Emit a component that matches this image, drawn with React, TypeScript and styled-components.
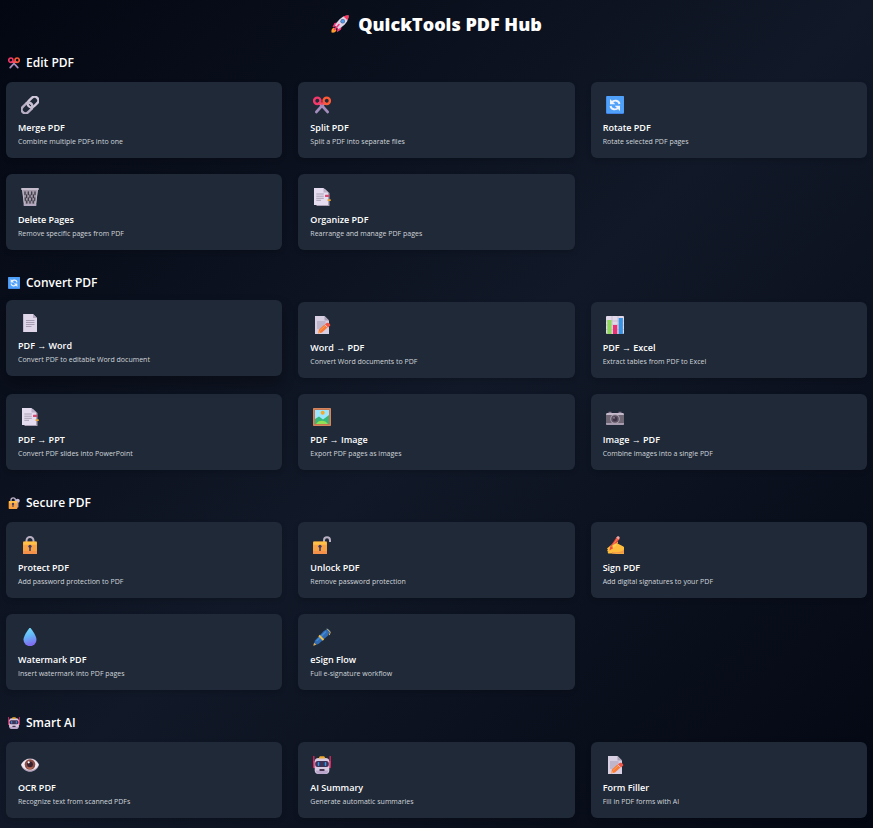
import React from 'react';
import styled, { createGlobalStyle } from 'styled-components';

const GlobalStyle = createGlobalStyle`
  *, *::before, *::after { box-sizing: border-box; }
  body {
    margin: 0;
    background: #030712;
    color: #fff;
    font-family: 'Open Sans', 'Noto Sans', sans-serif;
  }
  h1, h2, h3, p { margin: 0; }
`;

const Page = styled.main`
  min-height: 100vh;
  padding: 11px 6px 10px;
  background: linear-gradient(to bottom right, #030712, #111827, #030712);
`;

const PageTitle = styled.h1`
  display: flex;
  align-items: center;
  justify-content: center;
  gap: 9px;
  margin-bottom: 18px;
  font-size: 18px;
  line-height: 26px;
  font-weight: 800;
`;

const Section = styled.section`
  & + & { margin-top: 25px; }
`;

const SectionTitle = styled.h2`
  display: flex;
  align-items: center;
  gap: 6px;
  margin-bottom: 11px;
  padding-left: 2px;
  font-size: 12px;
  line-height: 16px;
  font-weight: 600;
`;

const CardGrid = styled.div`
  display: grid;
  grid-template-columns: repeat(3, minmax(0, 1fr));
  gap: 16px;
`;

const Card = styled.a<{ $raised?: boolean }>`
  display: block;
  padding: 12px 12px 11px;
  border-radius: 6px;
  background: #1f2937;
  color: inherit;
  text-decoration: none;
  box-shadow: ${(p) => (p.$raised ? '0 8px 14px rgba(0, 0, 0, 0.3)' : '0 2px 5px rgba(0, 0, 0, 0.15)')};
  transform: ${(p) => (p.$raised ? 'translateY(-2px)' : 'none')};
`;

const CardIcon = styled.div`
  display: flex;
  align-items: center;
  height: 22px;
  margin-bottom: 5px;
  padding-left: 3px;
`;

const CardTitle = styled.h3`
  margin-bottom: 2px;
  font-size: 9px;
  line-height: 14px;
  font-weight: 600;
`;

const CardText = styled.p`
  color: #d1d5db;
  font-size: 7px;
  line-height: 10px;
`;

const Svg = styled.svg<{ $size: number }>`
  display: block;
  flex: none;
  width: ${(p) => p.$size}px;
  height: ${(p) => p.$size}px;
`;

type IconName =
  | 'rocket' | 'scissors' | 'link' | 'rotate' | 'trash' | 'tabs' | 'page' | 'memo' | 'chart'
  | 'picture' | 'camera' | 'lock' | 'lockKey' | 'unlock' | 'sign' | 'drop' | 'pen' | 'robot' | 'eye';

const drawings: Record<IconName, React.ReactNode> = {
  rocket: (
    <>
      <path d="M0.5 17.5C0 15 1 13 3 12.5l2.500 2.500C5 17 3 18 0.500 17.500z" fill="#ff9d2e" />
      <path d="M6 7.500 3.500 8 1.500 12l4-.5zM10.500 12 10 14.500 6 17.300l.5-4.800z" fill="#f8387c" />
      <path d="M17.500.5C12 0.500 8 3.500 4 10.500l3.500 3.500C14.500 10 17.500 6 17.500.5z" fill="#dcd5e8" />
      <path d="M12.500 1.500C14 .7 16 .3 17.700.3c0 1.700-.4 3.500-1.200 5z" fill="#f8385f" />
      <circle cx="11.700" cy="6.300" r="2.300" fill="#5b6c9c" />
      <circle cx="11.700" cy="6.300" r="1.500" fill="#4c9cf0" />
      <path d="m3.500 14.500 4.500-5" stroke="#f8387c" strokeWidth="1.600" strokeLinecap="round" />
    </>
  ),
  scissors: (
    <>
      <path d="m3.300 16 8.200-9M14.700 16 6.500 7" stroke="#a48dbd" strokeWidth="2.600" strokeLinecap="round" />
      <circle cx="4.300" cy="4.800" r="3.200" fill="none" stroke="#f4386a" strokeWidth="2.400" />
      <circle cx="13.700" cy="4.800" r="3.200" fill="none" stroke="#ff5a35" strokeWidth="2.400" />
      <path d="M7.200 6.300 9 8.500M10.800 6.300 9 8.500" stroke="#f4485a" strokeWidth="2" />
    </>
  ),
  link: (
    <g transform="rotate(-45 9 9)" fill="none" strokeWidth="2.400">
      <rect x="-1.200" y="5.200" width="12" height="7.600" rx="3.800" stroke="#b9afc5" />
      <rect x="7.200" y="5.200" width="12" height="7.600" rx="3.800" stroke="#d0c7da" />
      <path d="M7 5.200c5 0 5 7.600 0 7.600" stroke="#c6bdd0" />
    </g>
  ),
  rotate: (
    <>
      <rect width="18" height="18" rx="1.200" fill="#3d77dd" />
      <rect x=".4" width="17.600" height="17.200" rx="1" fill="#4fa0f8" />
      <path d="M5.500 6.500C8 3.500 12.800 4.200 13.500 8M12.500 11.500C10 14.500 5.200 13.800 4.500 10" fill="none" stroke="#eff2ff" strokeWidth="1.900" />
      <path d="M4 3v5.300h5.300zM14 15V9.700H8.700z" fill="#eff2ff" />
    </>
  ),
  trash: (
    <>
      <path d="M1.300 1.300h15.400L15 17.500H3z" fill="#a59bac" />
      <path d="M4 4v2.500M7.300 4v2.500M10.700 4v2.500M14 4v2.500M5.600 7v2.500M9 7v2.500M12.400 7v2.500M4.200 10v2.500M7.300 10v2.500M10.700 10v2.500M13.800 10v2.500M5.800 13v2M9 13v2M12.200 13v2" stroke="#3c3945" strokeWidth="1.300" strokeLinecap="round" />
      <path d="M1.500 1.500 3.500 17M16.500 1.500 14.500 17" stroke="#c3bacb" />
      <rect y=".1" width="18" height="2" rx="1" fill="#c5bdcc" />
      <rect x="2.500" y="15.900" width="13" height="2" rx="1" fill="#b4a7c0" />
    </>
  ),
  tabs: (
    <>
      <path d="M3.500 1H12l4.500 4v13h-13z" fill="#aaa0b3" />
      <path d="M1 0h9.500L15 4.500V17H1z" fill="#e5dcf0" />
      <path d="M10.500 0v4.500H15z" fill="#bdb1c9" />
      <path d="M3.300 6h7.500M3.300 8.200h7.500M3.300 10.300h7.500M3.300 12.300h4.700" stroke="#aaa0b5" />
      <rect x="12" y="6.700" width="4" height="2.400" rx=".5" fill="#d9466d" />
      <rect x="14.500" y="11.200" width="3.300" height="1.900" rx=".5" fill="#e7a32e" />
    </>
  ),
  page: (
    <>
      <path d="M2 0h10l4 4v14H2z" fill="#e0d6ea" />
      <path d="M2 0h1v18H2z" fill="#c5bacf" />
      <path d="M12 0v4h4z" fill="#b5a9c1" />
      <path d="M5 6.500h8.500M5 8.500h8.500M5 10.500h8.500M5 12.500h5.500" stroke="#a297ae" strokeWidth=".9" />
    </>
  ),
  memo: (
    <>
      <path d="M2 0h9.500L16 4.500V18H2z" fill="#d9cfe3" />
      <path d="M11.500 0v4.500H16z" fill="#aaa0b6" />
      <path d="M4 6h8.500M4 8h8.500M4 10h8M4 12h5" stroke="#a297ae" strokeWidth=".9" />
      <path d="m5 17.500 1-4 6-5.500 3 3-6 5.500z" fill="#fa7a38" />
      <path d="m7 14.500 5.500-5" stroke="#ffa052" />
      <path d="m5 17.500.7-2.700L7.500 16.500z" fill="#ffb36c" />
      <path d="m12 8.200 1.700-1.300c1.800-.3 3.800 1 3.600 2.700L15 11.400z" fill="#f25545" />
      <path d="m11.600 8.500 3 3" stroke="#e2c6d8" />
    </>
  ),
  chart: (
    <>
      <rect width="18" height="18" rx="1" fill="#e1d8e9" />
      <path d="M0 5h18M0 9h18M0 13.500h18M6 0v18M12 0v18" stroke="#c2b8cb" strokeWidth=".7" />
      <path d="M1.300 4h4.200v14H1.300z" fill="#8bd957" />
      <path d="M7 9h4.200v9H7z" fill="#ed3074" />
      <path d="M12.700 2h4.200v16h-4.200z" fill="#3793e4" />
    </>
  ),
  picture: (
    <>
      <rect width="18" height="18" rx=".8" fill="#bd7050" />
      <rect x=".8" y=".8" width="16.400" height="16.400" fill="none" stroke="#e39465" strokeWidth=".8" />
      <path d="M2 2h14v14H2z" fill="#9ce5ff" />
      <circle cx="9.700" cy="4.700" r="2" fill="#f6a82c" />
      <path d="m2 11 4-2.500 4 3 6-4.500v9H2z" fill="#37b87a" />
      <path d="M3 16c2-4.500 9.500-4.500 12 0z" fill="#91df54" />
    </>
  ),
  camera: (
    <>
      <path d="M2.500 3.700h3v1.600h-3zM12.500 3.700h3v1.600h-3z" fill="#85778e" />
      <rect y="5" width="18" height="12" rx="1.200" fill="#706775" />
      <path d="M.8 5h16.400l.8 2H0z" fill="#c5bacb" />
      <path d="M0 15h18v1.100c0 .6-.4.900-1 .9H1c-.6 0-1-.3-1-.9z" fill="#a79caf" />
      <circle cx="9" cy="11" r="4.800" fill="#aaa0b0" />
      <circle cx="9" cy="11" r="3.800" fill="#5b5162" />
      <circle cx="9" cy="11" r="2.200" fill="#3f3549" />
      <circle cx="8" cy="9.800" r=".9" fill="#948a9d" />
    </>
  ),
  lock: (
    <>
      <path d="M5.500 7V4.500a3.500 3.500 0 0 1 7 0V7" fill="none" stroke="#b9b0c4" strokeWidth="2" />
      <rect x="2" y="5.500" width="14" height="12.500" rx="1" fill="#f7a345" />
      <path d="M2.500 5.700h13v3h-13z" fill="#ffc247" />
      <path d="M2 15h14v2.500c0 .3-.2.500-.5.500h-13c-.3 0-.5-.2-.5-.5z" fill="#f6914a" />
      <circle cx="9" cy="10.300" r="1.600" fill="#473b60" />
      <path d="M8.200 10.500h1.600V15H8.200z" fill="#473b60" />
    </>
  ),
  lockKey: (
    <>
      <circle cx="14.500" cy="5.700" r="3.200" fill="#c9bcda" />
      <path d="M13.500 8h2.200v7l-1.100 1.500-1.100-1.500z" fill="#aa9bbe" />
      <path d="M4.500 7V4.500a3.300 3.300 0 0 1 6.600 0V7" fill="none" stroke="#b9b0c4" strokeWidth="2" />
      <rect x="1" y="6" width="13" height="12" rx="1" fill="#f8a143" />
      <path d="M1.500 6.200h12v3h-12z" fill="#ffc247" />
      <circle cx="7.500" cy="10.500" r="1.700" fill="#473b60" />
      <path d="M6.700 10.500h1.600V15H6.700z" fill="#473b60" />
    </>
  ),
  unlock: (
    <>
      <path d="M11 6.500V4.300a3 3 0 0 1 6 0V6" fill="none" stroke="#b9b0c4" strokeWidth="2" />
      <rect y="5.500" width="14" height="12.500" rx="1" fill="#f7a345" />
      <path d="M.5 5.700h13v3H.5z" fill="#ffc247" />
      <path d="M0 15h14v2.500c0 .3-.2.500-.5.500H.5c-.3 0-.5-.2-.5-.5z" fill="#f6914a" />
      <circle cx="7" cy="10.300" r="1.600" fill="#473b60" />
      <path d="M6.200 10.500h1.600V15H6.200z" fill="#473b60" />
    </>
  ),
  sign: (
    <>
      <path d="M1 12.500 7.500 7l3-1.500c1.500-.4 2 1 1 2l5 2.500L18 11v7h-7l-5-.5H2.500c-1-.2-1-1.500 0-1.700-1.500-.2-1.700-1.700-.5-2z" fill="#ffbd3e" />
      <path d="m7 12 5-4.500M6 17.500h12v-4c-2.500 2.500-5 3-12 2.500z" fill="#f39a48" />
      <path d="m3.500 14.500.7-3.800 6-9c1-1 3.300-.2 3 1.500l-6.200 9z" fill="#e94d3c" />
      <path d="m5.500 11 6-8.500" stroke="#ff8058" />
      <path d="m10.200 1.800.8-1c1.100-1.200 3.300 0 2.500 1.600l-.6 1z" fill="#f0a5a7" />
      <path d="m6.500 9.500 3-2c1.500-.2 1.700 1 .7 2l-3.500 3.300z" fill="#ffcf4d" />
    </>
  ),
  drop: (
    <>
      <defs>
        <linearGradient id="dropFill" x2=".2" y2="1">
          <stop stopColor="#7ce5ff" />
          <stop offset=".5" stopColor="#63b8f8" />
          <stop offset="1" stopColor="#806cf0" />
        </linearGradient>
      </defs>
      <path d="M9-.5C8 0 2.500 8 2.500 11.700a6.500 6.500 0 0 0 13 0C15.500 8 10 0 9-.5z" fill="url(#dropFill)" />
    </>
  ),
  pen: (
    <>
      <path d="M.5 17.500 2 12.500l8.500-9.300L14.700.5 17.500 3.200 15 7.500 5.500 16z" fill="#306bb3" />
      <path d="m3.500 13 9.500-9.500" stroke="#438bd1" strokeWidth="1.500" />
      <path d="m.3 17.700.8-3 2.200 2.100z" fill="#e5ad4f" />
      <path d="m6 7.500 4.500 4.500" stroke="#f1bd4b" strokeWidth="1.900" />
      <path d="m14 .8 3.300 3.300-1 3" fill="none" stroke="#e0ae4f" />
    </>
  ),
  robot: (
    <>
      <path d="M.8.500v11M17.200.5v11" stroke="#d9255d" strokeWidth="1.400" strokeLinecap="round" />
      <path d="M0 5h3v7H1zM15 5h3l-1 7h-2z" fill="#e72e68" />
      <rect x="1.700" y="2" width="14.600" height="16" rx="3.700" fill="#d7cae2" />
      <path d="M6.800.3h4.400l1.300 2.200h-7z" fill="#f1a82e" />
      <path d="M2.500 14.500h13c-.6 2.200-2 3.500-4 3.500h-5c-2 0-3.400-1.300-4-3.500z" fill="#baa5cb" />
      <rect x="2.200" y="5" width="13.600" height="6" rx="2.500" fill="#3e3156" />
      <path d="M5.500 6.800v2.400M12.500 6.800v2.400" stroke="#299dec" strokeWidth="1.500" strokeLinecap="round" />
      <rect x="6.500" y="13" width="5" height="2" rx=".6" fill="#483653" />
    </>
  ),
  eye: (
    <>
      <path d="M0 9c3-8.500 15-9 18 0-3 9-15 9-18 0z" fill="#b8a6bd" />
      <path d="M.3 8.500C3.500 1 14.500 1 17.700 8.500c-2.500 7.500-14.700 7.500-17.400 0z" fill="#f1e9f1" />
      <circle cx="9" cy="8.500" r="5.300" fill="#8b4d47" />
      <path d="M5.500 11c1.500 2.300 5.500 2.500 7 0-2 .8-5 .8-7 0z" fill="#c2755e" />
      <circle cx="9" cy="8.300" r="2.900" fill="#39202e" />
      <circle cx="7.700" cy="6.300" r="1.100" fill="#fff" />
    </>
  ),
};

function Icon({ name, size = 18 }: { name: IconName; size?: number }) {
  return (
    <Svg $size={size} viewBox="0 0 18 18" fill="none" aria-hidden="true">
      {drawings[name]}
    </Svg>
  );
}

interface Tool {
  icon: IconName;
  title: string;
  text: string;
  raised?: boolean;
}

const sections: { icon: IconName; title: string; tools: Tool[] }[] = [
  {
    icon: 'scissors',
    title: 'Edit PDF',
    tools: [
      { icon: 'link', title: 'Merge PDF', text: 'Combine multiple PDFs into one' },
      { icon: 'scissors', title: 'Split PDF', text: 'Split a PDF into separate files' },
      { icon: 'rotate', title: 'Rotate PDF', text: 'Rotate selected PDF pages' },
      { icon: 'trash', title: 'Delete Pages', text: 'Remove specific pages from PDF' },
      { icon: 'tabs', title: 'Organize PDF', text: 'Rearrange and manage PDF pages' },
    ],
  },
  {
    icon: 'rotate',
    title: 'Convert PDF',
    tools: [
      { icon: 'page', title: 'PDF → Word', text: 'Convert PDF to editable Word document', raised: true },
      { icon: 'memo', title: 'Word → PDF', text: 'Convert Word documents to PDF' },
      { icon: 'chart', title: 'PDF → Excel', text: 'Extract tables from PDF to Excel' },
      { icon: 'tabs', title: 'PDF → PPT', text: 'Convert PDF slides into PowerPoint' },
      { icon: 'picture', title: 'PDF → Image', text: 'Export PDF pages as images' },
      { icon: 'camera', title: 'Image → PDF', text: 'Combine images into a single PDF' },
    ],
  },
  {
    icon: 'lockKey',
    title: 'Secure PDF',
    tools: [
      { icon: 'lock', title: 'Protect PDF', text: 'Add password protection to PDF' },
      { icon: 'unlock', title: 'Unlock PDF', text: 'Remove password protection' },
      { icon: 'sign', title: 'Sign PDF', text: 'Add digital signatures to your PDF' },
      { icon: 'drop', title: 'Watermark PDF', text: 'Insert watermark into PDF pages' },
      { icon: 'pen', title: 'eSign Flow', text: 'Full e-signature workflow' },
    ],
  },
  {
    icon: 'robot',
    title: 'Smart AI',
    tools: [
      { icon: 'eye', title: 'OCR PDF', text: 'Recognize text from scanned PDFs' },
      { icon: 'robot', title: 'AI Summary', text: 'Generate automatic summaries' },
      { icon: 'memo', title: 'Form Filler', text: 'Fill in PDF forms with AI' },
    ],
  },
];

export default function App() {
  return (
    <>
      <GlobalStyle />
      <Page>
        <PageTitle>
          <Icon name="rocket" />
          QuickTools PDF Hub
        </PageTitle>
        {sections.map((section) => (
          <Section key={section.title}>
            <SectionTitle>
              <Icon name={section.icon} size={12} />
              {section.title}
            </SectionTitle>
            <CardGrid>
              {section.tools.map((tool) => (
                <Card key={tool.title} href="#" $raised={tool.raised}>
                  <CardIcon>
                    <Icon name={tool.icon} />
                  </CardIcon>
                  <CardTitle>{tool.title}</CardTitle>
                  <CardText>{tool.text}</CardText>
                </Card>
              ))}
            </CardGrid>
          </Section>
        ))}
      </Page>
    </>
  );
}
